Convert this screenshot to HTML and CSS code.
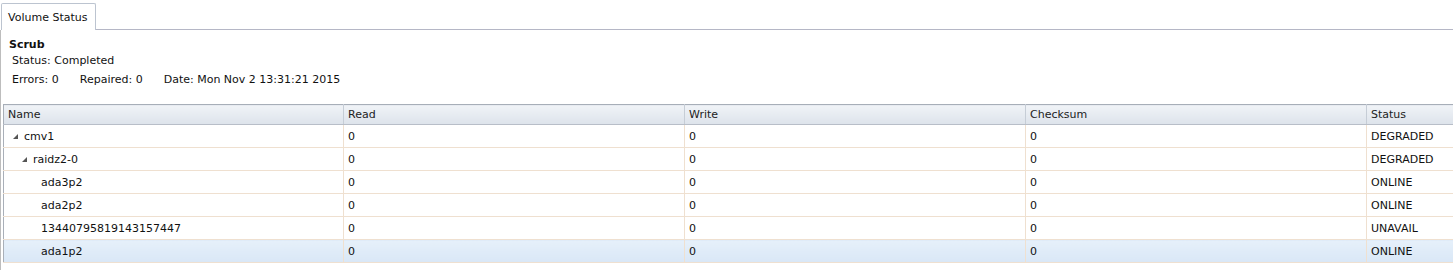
FILE: index.html
```html
<!DOCTYPE html>
<html>
<head>
    <title>Volume Status</title>
    <link rel="stylesheet" href="styles.css">
</head>
<body>
    <div class="tabbar">
        <div class="tab">Volume Status</div>
        <div class="tab-fill"></div>
    </div>

    <div class="panel">
        <div class="scrub">
            <div class="scrub-title">Scrub</div>
            <div class="scrub-line">Status: Completed</div>
            <div class="scrub-line stats">
                <span>Errors: 0</span>
                <span>Repaired: 0</span>
                <span>Date: Mon Nov 2 13:31:21 2015</span>
            </div>
        </div>

        <table class="grid">
            <colgroup>
                <col class="c-name">
                <col class="c-num">
                <col class="c-num">
                <col class="c-num">
                <col class="c-status">
            </colgroup>
            <thead>
                <tr>
                    <th>Name</th>
                    <th>Read</th>
                    <th>Write</th>
                    <th>Checksum</th>
                    <th>Status</th>
                </tr>
            </thead>
            <tbody>
                <tr>
                    <td><span class="node lvl0"><svg class="arrow" width="5" height="5" viewBox="0 0 5 5"><polygon points="5,0 5,5 0,5"/></svg>cmv1</span></td>
                    <td>0</td><td>0</td><td>0</td><td>DEGRADED</td>
                </tr>
                <tr>
                    <td><span class="node lvl1"><svg class="arrow" width="5" height="5" viewBox="0 0 5 5"><polygon points="5,0 5,5 0,5"/></svg>raidz2-0</span></td>
                    <td>0</td><td>0</td><td>0</td><td>DEGRADED</td>
                </tr>
                <tr>
                    <td><span class="node lvl2">ada3p2</span></td>
                    <td>0</td><td>0</td><td>0</td><td>ONLINE</td>
                </tr>
                <tr>
                    <td><span class="node lvl2">ada2p2</span></td>
                    <td>0</td><td>0</td><td>0</td><td>ONLINE</td>
                </tr>
                <tr>
                    <td><span class="node lvl2">13440795819143157447</span></td>
                    <td>0</td><td>0</td><td>0</td><td>UNAVAIL</td>
                </tr>
                <tr class="selected">
                    <td><span class="node lvl2">ada1p2</span></td>
                    <td>0</td><td>0</td><td>0</td><td>ONLINE</td>
                </tr>
            </tbody>
        </table>
    </div>
</body>
</html>
```

FILE: styles.css
```css
body, html {
    margin: 0;
    background-color: #fff;
    font-family: "DejaVu Sans", Verdana, sans-serif;
    font-size: 11px;
    color: #111;
    overflow: hidden;
}

/* tab strip */
.tabbar {
    display: flex;
    align-items: flex-end;
    height: 30px;
}

.tab {
    margin-left: 1px;
    height: 27px;
    line-height: 28px;
    padding: 0 8px 0 6px;
    border: 1px solid #bcc4d0;
    border-bottom: none;
    border-radius: 2px 2px 0 0;
    background-color: #fff;
    box-sizing: border-box;
    color: #111;
}

.tab-fill {
    flex: 1;
    border-bottom: 1px solid #b5b7c6;
}

.panel {
    border-left: 1px solid #bdbdbd;
    padding-left: 2px;
    height: 240px;
}

/* scrub summary */
.scrub {
    padding: 7px 0 0 6px;
    height: 67px;
}

.scrub-title {
    font-weight: bold;
    line-height: 15px;
}

.scrub-line {
    line-height: 16px;
    padding-left: 3px;
    margin-top: 1px;
}

.stats {
    display: flex;
    gap: 21px;
    margin-top: 3px;
}

/* grid */
.grid {
    border-collapse: collapse;
    table-layout: fixed;
    width: 1450px;
    border-left: 1px solid #a9afb8;
}

.c-name { width: 340px; }
.c-num { width: 341px; }
.c-status { width: 87px; }

.grid th {
    height: 19px;
    padding: 0 4px;
    text-align: left;
    font-weight: normal;
    color: #222;
    background: linear-gradient(#f0f3f7, #dde3eb);
    border-top: 1px solid #a7aeb8;
    border-bottom: 1px solid #b8bec8;
    border-right: 1px solid #c6cdd6;
}

.grid td {
    height: 22px;
    padding: 0 4px;
    white-space: nowrap;
    overflow: hidden;
    border-bottom: 1px solid #efe0d0;
    border-right: 1px solid #efe0d0;
}

.grid th:last-child,
.grid td:last-child {
    border-right: none;
}

.grid tr.selected td {
    background: linear-gradient(#e6f0fa, #d9e7f6);
}

.node {
    display: inline-flex;
    align-items: center;
}

.lvl0 { padding-left: 5px; }
.lvl1 { padding-left: 14px; }
.lvl2 { padding-left: 33px; }

.arrow {
    fill: #555;
    margin-right: 6px;
    margin-top: 1px;
}
```
